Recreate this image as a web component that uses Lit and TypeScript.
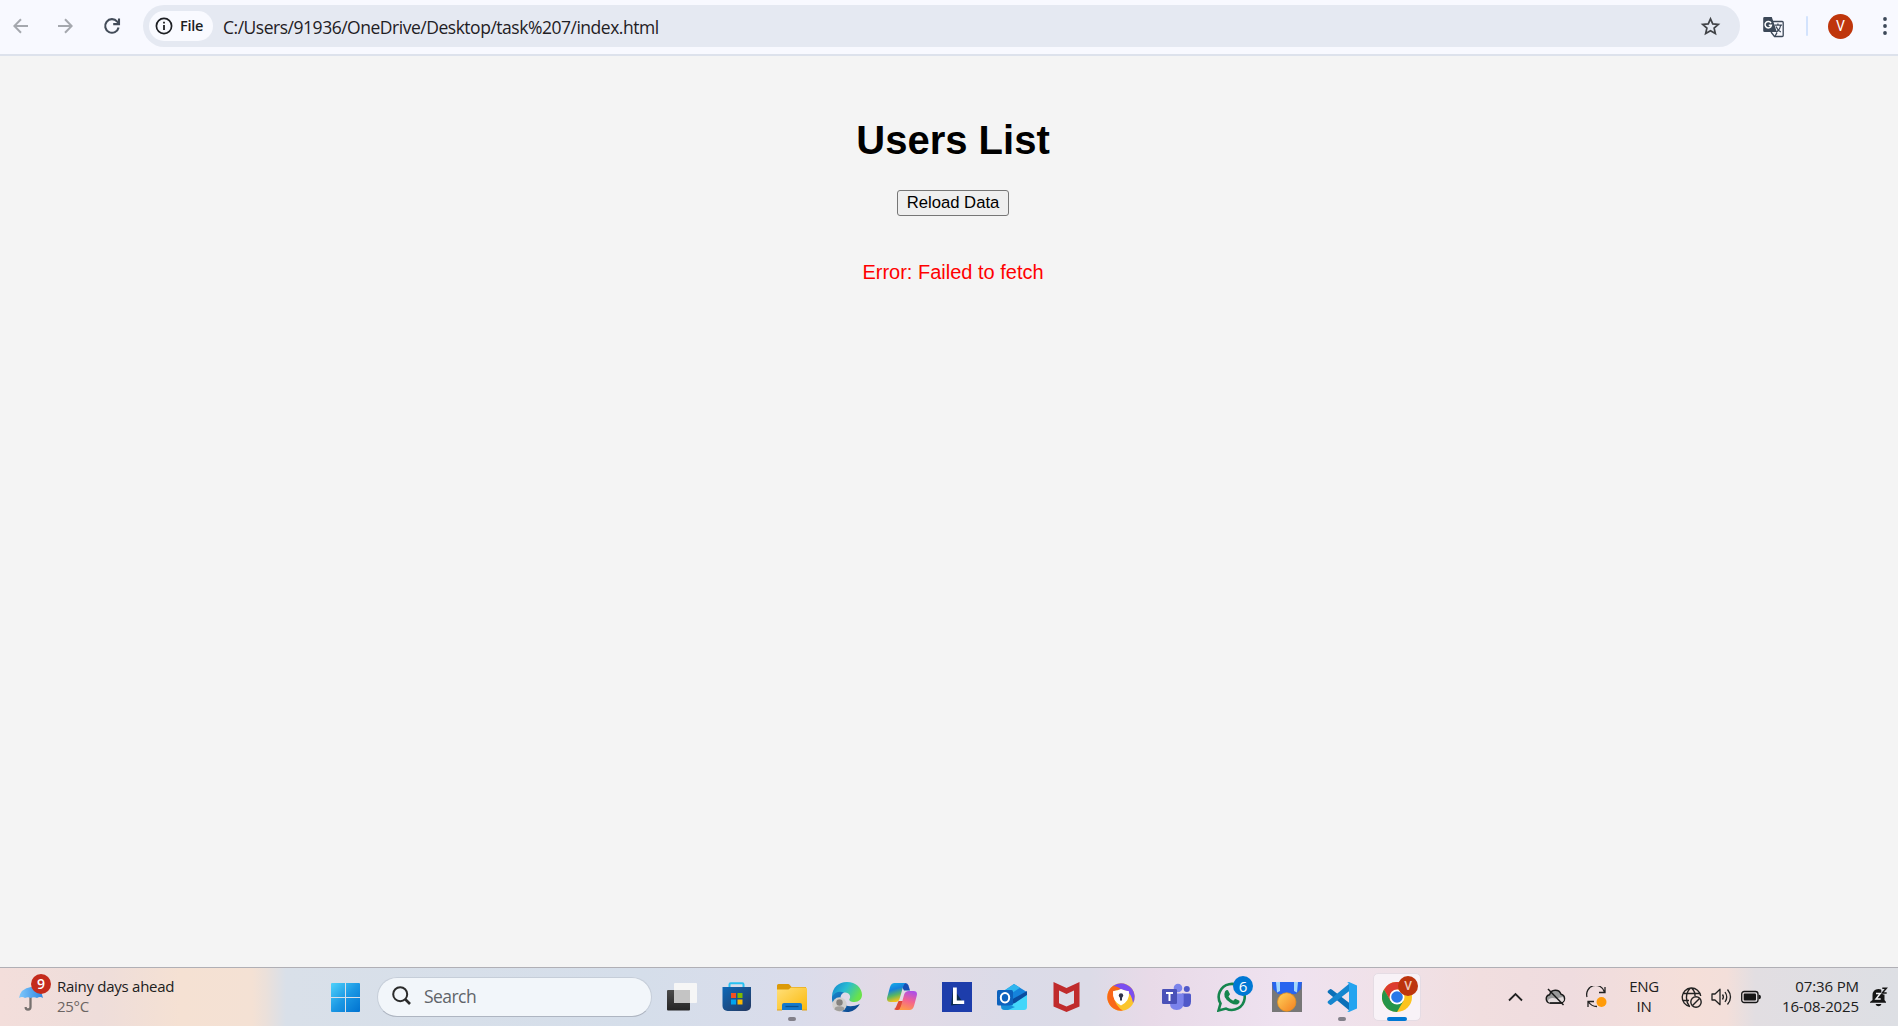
import { LitElement, html, svg, css, TemplateResult } from "lit";
import { customElement } from "lit/decorators.js";

const ui = css`"Segoe UI", "Open Sans", "Noto Sans", sans-serif`;

@customElement("browser-toolbar")
class BrowserToolbar extends LitElement {
  static styles = css`
    :host { display: flex; align-items: center; box-sizing: border-box; height: 56px; padding: 0 4px 2px 13px; background: #f8f9ff; border-bottom: 2px solid #dde2ec; font-family: ${ui}; }
    svg { display: block; flex: none; }
    .nav { display: flex; align-items: center; gap: 30px; width: 130px; }
    .address { display: flex; align-items: center; flex: none; box-sizing: border-box; width: 1597px; height: 42px; border-radius: 21px; background: #e5e9f2; padding: 0 19px 0 6px; }
    .chip { display: flex; align-items: center; box-sizing: border-box; width: 64px; height: 30px; border-radius: 15px; background: #f9faff; padding-left: 6px; gap: 7px; font-size: 14.5px; font-weight: 600; letter-spacing: -0.3px; color: #1d1f23; line-height: 30px; }
    .chip span { margin-top: -1px; }
    .url { flex: 1; margin-left: 10px; font-size: 17.5px; letter-spacing: -0.48px; color: #1f2024; line-height: 28px; padding-top: 1px; }
    .translate { margin: 2px 0 0 23px; }
    .divider { width: 2px; height: 20px; margin: 0 20px 0 22px; background: #d3e3fd; border-radius: 1px; }
    .avatar { display: grid; place-items: center; width: 25px; height: 25px; border-radius: 50%; background: #bf360c; color: #fff; font: 14px/25px Roboto, sans-serif; }
    .menu { margin-left: 29px; }
  `;
  render() {
    return html`
      <div class="nav">
        <svg width="15" height="16" viewBox="0 0 15 16" fill="none" stroke="#a5a8ae" stroke-width="2"><path d="M15 8H1.6M8 1.2 1.3 8 8 14.8"/></svg>
        <svg width="15" height="16" viewBox="0 0 15 16" fill="none" stroke="#a5a8ae" stroke-width="2"><path d="M0 8h13.4M7 1.2 13.7 8 7 14.8"/></svg>
        <svg width="18" height="18" viewBox="0 0 18 18" fill="none" stroke="#434c59" stroke-width="2.1"><path d="M15.6 10.5A6.8 6.8 0 1 1 14.2 4.6L15.5 6"/><path d="M16 1.5v5.6h-5.8"/></svg>
      </div>
      <div class="address">
        <div class="chip">
          <svg width="18" height="18" viewBox="0 0 18 18"><circle cx="9" cy="9" r="7.6" fill="none" stroke="#1d1f23" stroke-width="1.7"/><path d="M9 8v5M9 4.7v1.9" stroke="#1d1f23" stroke-width="1.8"/></svg>
          <span>File</span>
        </div>
        <div class="url">C:/Users/91936/OneDrive/Desktop/task%207/index.html</div>
        <svg width="21" height="20" viewBox="0 0 21 20" fill="none" stroke="#414347" stroke-width="1.7" stroke-linejoin="miter"><path d="m10.5 2.8 2.25 5.1 5.55.5-4.2 3.7 1.25 5.45-4.85-2.9-4.85 2.9 1.25-5.45-4.2-3.7 5.55-.5z"/></svg>
      </div>
      <svg class="translate" width="21" height="22" viewBox="0 0 21 22">
        <path d="M9 5.5h10.2a1 1 0 0 1 1 1v13a1 1 0 0 1-1 1h-7.700L8 16" fill="#f8f9ff" stroke="#3c4858" stroke-width="1.300"/>
        <path d="M1.500 1h7.300l5 15H1.500A1.300 1.300 0 0 1 .2 14.700V2.300A1.300 1.300 0 0 1 1.500 1z" fill="#3c4858"/>
        <path d="M8 7A3.200 3.200 0 1 0 8.400 9.300H5.700" fill="none" stroke="#fff" stroke-width="1.500"/>
        <path d="M11.500 9.200h7.500M14.900 7.500v1.700M17.600 9.500c-.5 3-2.400 5.400-4.300 6.500M13 10.500c1 2.200 2.600 4.200 4.800 5.500M12 20.300l2-3.700" fill="none" stroke="#3c4858" stroke-width="1.300"/>
      </svg>
      <div class="divider"></div>
      <div class="avatar">V</div>
      <svg class="menu" width="6" height="20" viewBox="0 0 6 20" fill="#3c4858"><circle cx="3" cy="3" r="1.900"/><circle cx="3" cy="10" r="1.900"/><circle cx="3" cy="17" r="1.900"/></svg>
    `;
  }
}

@customElement("users-page")
class UsersPage extends LitElement {
  static styles = css`
    :host { display: flex; flex-direction: column; align-items: center; box-sizing: border-box; padding: 61px 0 0 8px; background: #f4f4f4; font-family: Arial, "Liberation Sans", sans-serif; }
    h1 { margin: 0; font-size: 40px; line-height: 46px; }
    button { box-sizing: border-box; width: 112px; height: 26px; margin: 27px 0 0; padding: 0 0 1px; border: 1px solid #767676; border-radius: 3px; background: #efefef; color: #000; font: 16.667px/22px Arial, "Liberation Sans", sans-serif; white-space: nowrap; }
    p { margin: 45px 0 0; color: #f00; font-size: 20px; line-height: 23px; }
  `;
  render() {
    return html`<h1>Users List</h1><button>Reload Data</button><p>Error: Failed to fetch</p>`;
  }
}

const icon = (body: TemplateResult) => html`<svg width="30" height="30" viewBox="0 0 30 30">${body}</svg>`;

const taskView = svg`
  <defs><linearGradient id="tv" x2="0" y2="1"><stop stop-color="#4b4b4b"/><stop offset="1" stop-color="#252525"/></linearGradient></defs>
  <rect y="8" width="23" height="20.500" rx="1" fill="url(#tv)"/>
  <rect x="7" y="1" width="23" height="20" rx="1" fill="#f6f6f6"/><rect x="7" y="8" width="16" height="13" fill="#c4c4c4"/>`;

const store = svg`
  <defs><linearGradient id="st" x2="1" y2="1"><stop stop-color="#0d68b8"/><stop offset="1" stop-color="#25375f"/></linearGradient></defs>
  <path d="M8 6V2.200Q8 1 9.200 1h11.600Q22 1 22 2.200V6" transform="translate(-.5 .3)" fill="none" stroke="#27c1f2" stroke-width="2"/>
  <path d="M.5 5h28.500v19a5 5 0 0 1-5 5h-18.500a5 5 0 0 1-5-5z" fill="url(#st)"/>
  <path d="M9 11h5v5H9z" fill="#f25022"/><path d="M15.500 11h5v5h-5z" fill="#7fba00"/><path d="M9 17.500h5v5H9z" fill="#00a4ef"/><path d="M15.500 17.500h5v5h-5z" fill="#ffb900"/>`;

const explorer = svg`
  <defs><linearGradient id="fo" x2="1" y2="1"><stop stop-color="#ffe07a"/><stop offset="1" stop-color="#fbb90c"/></linearGradient></defs>
  <path d="M0 3.500Q0 2 1.500 2h9.500q1.200 0 2 1.200L14.500 5H29v4H0z" fill="#dc9a08"/>
  <path d="M0 7.500h11.500L14 5.500h14.500q1.500 0 1.500 1.500v21H0z" fill="url(#fo)"/>
  <path d="M5 28v-5q0-2 2-2h16q2 0 2 2v5z" fill="#1479cb"/><path d="M8.500 24.500h13" stroke="#0b4f8c" stroke-width="1.300"/><path d="M0 28h5M25 28h5" stroke="#e0a21a"/>`;

const edge = svg`
  <defs>
    <linearGradient id="ea" x2="1" y2=".45"><stop stop-color="#1182cf"/><stop offset=".5" stop-color="#28bcd2"/><stop offset="1" stop-color="#69e24b"/></linearGradient>
    <linearGradient id="eb" x2="1" y2="1"><stop stop-color="#1684cc"/><stop offset="1" stop-color="#0b3e86"/></linearGradient>
  </defs>
  <path d="M0 14C.5 5.500 6.500 0 15 0c8.800 0 15 6 15 12.800 0 4.500-3.200 7.200-7.500 7.200-4 0-6-1.500-5-3 1.600-2.300.3-6.500-4.500-6.500C7 10.500 2 14 0 20z" fill="url(#ea)"/>
  <path d="M0 15C2.500 10 7.500 8.500 12 10.500c-4 2-4.500 6.500-2 10 3 4.200 10 5 17.800 1.500C24.500 27.500 20 30 15 30 6 30-.5 23 0 15z" fill="url(#eb)"/>
  <circle cx="7.500" cy="22.500" r="7.200" fill="#d2d0ce"/><circle cx="7.500" cy="20.500" r="3.200" fill="#85827f"/><path d="M2.500 27.500q0-3.200 5-3.200t5 3.200q-5 3.500-10 0z" fill="#a09e9b"/>`;

const copilot = svg`
  <defs>
    <linearGradient id="ca" x2=".3" y2="1"><stop stop-color="#16b4ea"/><stop offset=".4" stop-color="#1681dc"/><stop offset=".7" stop-color="#59b663"/><stop offset="1" stop-color="#f2c21b"/></linearGradient>
    <linearGradient id="cb" x1=".6" x2=".3" y2="1"><stop stop-color="#ae50e6"/><stop offset=".5" stop-color="#f4648e"/><stop offset="1" stop-color="#ff9c48"/></linearGradient>
  </defs>
  <path d="M13 1h5.500q2.200 0 3 2.500L23 8.500h-6z" fill="#174db3"/>
  <path d="M7 27q1 0 2-2l2.500-6h5L13 28H9.500Q8 28 7 27z" fill="#df4a36"/>
  <path d="M7.500 1H19q-2 .5-3 4l-3 10.500Q12 20 8.500 20H3.500Q-1 20 .3 15L3 5Q4.300 1 7.500 1z" fill="url(#ca)"/>
  <path d="M22.500 28H11q2-.5 3-4l3-11q1-4 5-4h4.500q4.500 0 3.200 5L27 24q-1.200 4-4.500 4z" fill="url(#cb)"/>`;

const lApp = svg`<path d="M0 0h30v30H0z" fill="#1d3dab"/><path d="m11 6-2 17.500 13-1.500z" fill="#0b2c4e"/><path d="M11 5.500h3.800v13h7.400V22H11z" fill="#fff"/>`;

const outlook = svg`
  <path d="M4 11 17 2l12 7.500v5L14 23H4z" fill="#1583dc"/><path d="m8 8 9-6 6 3.700L9 15z" fill="#2fb5ee"/>
  <path d="m14 18 16-9v6L15 25z" fill="#0a4c9f"/><path d="M30 13v12q0 3-3 3H8q-3 0-4-2l14-5z" fill="#43d6fa"/><path d="m4 20 14 5-7 3H8q-4 0-4-4z" fill="#168fd8"/>
  <rect y="8" width="16" height="15.500" rx="1.500" fill="#0d62bd"/><ellipse cx="8" cy="15.700" rx="4.200" ry="4.700" fill="none" stroke="#fff" stroke-width="2"/>`;

const mcafee = svg`<path fill="#c02b2c" fill-rule="evenodd" d="m1.500 0 13 6 13-6v24.500l-13 5.500-13-5.500zm5.500 8.500v12.700l7.500 3.300 7.500-3.300V8.500L14.500 12z"/>`;

const secureBrowser = svg`
  <circle cx="14" cy="15" r="13.700" fill="#fbc52d"/>
  <path d="M6 4A13.700 13.700 0 0 1 27.700 14q0 4-1.700 7-1-8-6-11.500T6 9z" fill="#7b4ff0"/>
  <path d="M8.500 2.500A13.700 13.700 0 0 0 16 28.600q-3-1-6-5.500T6 9q3-1.500 8-1.500-3-3.500-8-3.500z" fill="#f96719"/>
  <path d="M14 7q4 1.800 8 2.300 1 10-8 14.200Q5 19.300 6 9.300 10 8.800 14 7z" fill="#fff"/>
  <circle cx="14" cy="13.500" r="2.200" fill="#303448"/><path d="M13 14h2v4.500h-2z" fill="#303448"/>`;

const teams = svg`
  <circle cx="16" cy="6" r="4.300" fill="#7b83eb"/><circle cx="24.800" cy="7" r="3" fill="#5059c9"/>
  <path d="M20 11.500h7.500q1.500 0 1.500 1.500v6.500q0 5.500-5 5.500-4 0-4-4z" fill="#5059c9"/>
  <path d="M9 11.500h11.500q1.200 0 1.200 1.200V20q0 8-7 8T8 21z" fill="#7b83eb"/>
  <rect y="7" width="15" height="15" rx="1.300" fill="#4a51b8"/><path d="M4 11h7M7.500 11v8" stroke="#fff" stroke-width="2"/>`;

const whatsapp = svg`
  <path d="M1.500 28.500 3.500 21.500A13 13 0 1 1 9 26.600z" fill="none" stroke="#15854d" stroke-width="2.600"/>
  <path d="M8 9.500q1.500-2 3-1.300l2 4-1.500 2.200q1.700 3 4.700 4.300l2-2 4.300 2q.6 2-1.800 3.500-2.500 1.200-7-1.200-4.500-2.500-6-6Q6.800 12 8 9.500z" fill="#15854d"/>`;

const medal = svg`
  <defs><linearGradient id="md" x2="1" y2="1"><stop stop-color="#ffd25a"/><stop offset="1" stop-color="#f47f20"/></linearGradient></defs>
  <path d="M0 0h30v30H0z" fill="#777"/><path d="M0 0h30l-1 7-5 5H6L1 7z" fill="#2864ef"/><path d="M4 0h4v9L5 10.500zM22 0h4l-1 10.500L22 9z" fill="#a5d8fb"/>
  <circle cx="14.700" cy="20" r="9.200" fill="url(#md)" stroke="#e8931c" stroke-width=".8"/>`;

const vscode = svg`
  <path d="M1 8.800 3 7.200q.8-.5 1.800.3L23 21.500V29L.9 10.700Q.2 9.700 1 8.800z" fill="#0b70b8"/>
  <path d="M1 21.200 3 22.800q.8.500 1.800-.3L23 8.500V1L.9 19.300q-.7 1 .1 1.900z" fill="#1686cf"/>
  <path d="M22 0 30 3.500v23L22 30q-1 0-1.800-1 1.800.5 1.800-1.500v-25Q22 .5 20.200 1 21 0 22 0z" fill="#24a4f0"/>`;

const chrome = svg`
  <circle cx="15" cy="15" r="15" fill="#fcc31e"/>
  <path d="M2 7.500A15 15 0 0 1 28 7.500H15L8.500 19z" fill="#dc3b30"/>
  <path d="M2 7.500 8.500 18.800Q12 23 21.500 18.800L15 30A15 15 0 0 1 2 7.500z" fill="#24954a"/>
  <circle cx="15" cy="15" r="7.500" fill="#fff"/><circle cx="15" cy="15" r="5.800" fill="#2a78e8"/>`;

@customElement("task-bar")
class TaskBar extends LitElement {
  static styles = css`
    :host { display: flex; align-items: center; box-sizing: border-box; height: 59px; padding: 0 10px 0 17px; border-top: 1px solid #b0afb5; font: 15px/20px ${ui}; color: #202020;
      background: linear-gradient(90deg, #f3dedb 0, #eeddda 100px, #f5e1d3 180px, #f4e1d4 252px, #ebe0da 266px, #d9e0e9 286px, #d5deea 640px, #dadceb 800px, #e3dae6 890px, #dbdbe8 1010px, #dcdbe7 1090px, #e8dae8 1150px, #efe2f0 1290px, #f0e1e7 1400px, #f1dedf 1480px, #efdcdf 1570px, #f5dfd9 1690px, #f3dfda 1727px, #e2dee2 1755px, #dddfe4 1898px); }
    svg { display: block; flex: none; }
    .weather { display: flex; width: 314px; align-items: center; }
    .umbrella { position: relative; width: 40px; height: 44px; padding-top: 10px; box-sizing: border-box; }
    .badge { position: absolute; display: grid; place-items: center; width: 20px; height: 20px; border-radius: 50%; color: #fff; font-size: 14px; line-height: 20px; }
    .red { left: 14px; top: -1px; background: #c42b1c; font-weight: 600; }
    .blue { left: 16px; top: -6px; background: #0078d4; font-size: 15px; }
    .profile { left: 16px; top: -6px; background: #bd340d; color: #efc8b8; font: 500 12px/20px Roboto, sans-serif; }
    .forecast { letter-spacing: -0.27px; margin-top: -3px; }
    .temp { color: #6b6462; }
    .search { display: flex; align-items: center; box-sizing: border-box; width: 275px; height: 40px; margin: 0 5px 0 17px; padding: 0 0 2px 14px; gap: 13px; border: 1px solid #c6ced9; border-bottom-color: #aeb5c1; border-radius: 20px; background: #f2f6fa; color: #606469; font-size: 17.5px; letter-spacing: -0.55px; }
    .apps { display: flex; gap: 5px; }
    .app { position: relative; display: grid; place-items: center; box-sizing: border-box; width: 50px; height: 50px; }
    .glyph { position: relative; width: 30px; height: 30px; }
    .active::before { content: ""; position: absolute; inset: 1px; border: 1px solid #e5dce4; border-radius: 5px; background: #f8f2f7; }
    .running::after { content: ""; position: absolute; left: 21px; bottom: 1px; width: 8px; height: 4px; border-radius: 2px; background: #82808a; }
    .active::after { left: 15px; width: 20px; background: #0078d4; }
    .tray { display: flex; align-items: center; flex: 1; }
    .chevron { margin-left: 86px; }
    .cloud { margin-left: 22px; }
    .sync { margin-left: 20px; }
    .lang { width: 36px; margin: -2px 19px 0 19px; text-align: center; letter-spacing: -0.3px; }
    .status { display: flex; gap: 9px; align-items: center; }
    .clock { flex: 1; text-align: right; letter-spacing: -0.12px; margin: -3px 11px 0 0; }
  `;
  app(body: TemplateResult, state = "", badge: unknown = "") {
    return html`<div class="app ${state}"><div class="glyph">${icon(body)}${badge}</div></div>`;
  }
  render() {
    return html`
      <div class="weather">
        <div class="umbrella">
          <svg width="28" height="28" viewBox="0 0 28 28">
            <defs><linearGradient id="um" x2="1"><stop stop-color="#7fc8fa"/><stop offset="1" stop-color="#2e86e2"/></linearGradient></defs>
            <path d="M13.500 11v11q0 2.500-2.500 2.500T8.700 22" fill="none" stroke="#77716f" stroke-width="2.300"/>
            <path d="M2 13Q3.500 3.500 14 2q10.500 1.500 12 11-3-2-6 0-3-1.500-6.200 0-3-1.500-5.800 0-3-2-6 0z" fill="url(#um)"/>
          </svg>
          <span class="badge red">9</span>
        </div>
        <div class="forecast">Rainy days ahead<div class="temp">25°C</div></div>
      </div>
      <svg width="29" height="29" viewBox="0 0 29 29">
        <defs><linearGradient id="win" gradientUnits="userSpaceOnUse" x2="29" y2="29"><stop stop-color="#4fd2fb"/><stop offset=".5" stop-color="#1b98e4"/><stop offset="1" stop-color="#0072d0"/></linearGradient></defs>
        <path fill="url(#win)" d="M1 0h13v14H0V1q0-1 1-1zM15 0h13q1 0 1 1v13H15zM0 15h14v14H1q-1 0-1-1zM15 15h14v13q0 1-1 1H15z"/>
      </svg>
      <div class="search">
        <svg width="19" height="20" viewBox="0 0 19 20" fill="none" stroke="#2b2b2b"><circle cx="8.200" cy="8.200" r="7" stroke-width="2"/><path d="m13 13 5 5" stroke-width="2.600"/></svg>
        <span>Search</span>
      </div>
      <div class="apps">
        ${this.app(taskView)}${this.app(store)}${this.app(explorer, "running")}${this.app(edge)}${this.app(copilot)}${this.app(lApp)}
        ${this.app(outlook)}${this.app(mcafee)}${this.app(secureBrowser)}${this.app(teams)}
        ${this.app(whatsapp, "", html`<span class="badge blue">6</span>`)}
        ${this.app(medal)}${this.app(vscode, "running")}
        ${this.app(chrome, "running active", html`<span class="badge profile">V</span>`)}
      </div>
      <div class="tray">
        <svg class="chevron" width="15" height="10" viewBox="0 0 15 10" fill="none" stroke="#222" stroke-width="1.800"><path d="m1 8.500 6.500-6.500L14 8.500"/></svg>
        <svg class="cloud" width="21" height="18" viewBox="0 0 21 18" stroke="#181818" stroke-width="1.400">
          <path d="M5 15a4.200 4.200 0 0 1-.4-8.300A6 6 0 0 1 16 6.200 4.500 4.500 0 0 1 16 15z" fill="#999"/>
          <path d="M4 14.500q-2-1.500 0-3.500 3-1.500 6.500-.5L18 9l1 3q-1 2.300-3 2.300z" fill="#e4dcdd" stroke="none"/>
          <path d="M5 15h11" fill="none"/><path d="m3 1 15.500 16" stroke-width="1.500"/>
        </svg>
        <svg class="sync" width="21" height="22" viewBox="0 0 21 22" fill="none" stroke="#222" stroke-width="1.300">
          <path d="M1 11A9 9 0 0 1 18.500 6M19 1v5.500h-6M8 15.500H2V21M2.500 16q3 4.500 8.500 4.500"/><circle cx="15.500" cy="16" r="5" fill="#ff9b0a" stroke="none"/>
        </svg>
        <div class="lang">ENG<br>IN</div>
        <div class="status">
          <svg width="21" height="21" viewBox="0 0 21 21" fill="none" stroke="#222" stroke-width="1.400">
            <path d="M19.700 9A9.300 9.300 0 1 0 9 19.500M1.500 6.500h17.500M1.500 13.500H8M9.500 1C3.500 7 5 15 8.500 19.500M10.500 1Q14.300 4.500 14 9"/>
            <circle cx="15" cy="15" r="5.200"/><path d="m11.500 18.500 7-7"/>
          </svg>
          <svg width="21" height="20" viewBox="0 0 21 20" fill="none" stroke="#222" stroke-width="1.300">
            <path d="M1 7h3l5-4.700v15.400L4 13H1z" stroke-linejoin="round"/><path d="M11.500 7.500q1.800 2.500 0 5"/><path d="M14 5q3.500 5 0 10"/><path d="M16.500 2.500q6 7.500 0 15"/>
          </svg>
          <svg width="20" height="14" viewBox="0 0 20 14"><rect x=".7" y="1.500" width="16.300" height="11" rx="2.500" fill="none" stroke="#161616" stroke-width="1.300"/><rect x="2.700" y="3.500" width="12.300" height="7" rx="1" fill="#161616"/><path d="M17.500 4.500q2.500.3 2.500 2.500t-2.500 2.500z" fill="#161616"/></svg>
        </div>
        <div class="clock">07:36 PM<br>16-08-2025</div>
        <svg width="18" height="20" viewBox="0 0 18 20">
          <path d="M2.500 13V8.500Q2.500 2 8.500 2t6 6.500V13l1.500 2v.8H0V15zM5.500 17h6q-.8 2.300-3 2.300t-3-2.300z" fill="#161616"/>
          <path d="M11.300 0H18v7.500h-4.500l-2.200-1z" fill="#dedfe4"/>
          <path d="M12.300 1.300h4l-4 4.700h4.400" fill="none" stroke="#161616" stroke-width="1.500"/>
          <path d="M6 6.500h4.300L6 12h4.700" fill="none" stroke="#f4f4f6" stroke-width="1.500"/>
        </svg>
      </div>
    `;
  }
}

@customElement("app-root")
class AppRoot extends LitElement {
  static styles = css`
    :host { display: flex; flex-direction: column; width: 100%; height: 100vh; overflow: hidden; }
    users-page { flex: 1; }
  `;
  render() {
    return html`<browser-toolbar></browser-toolbar><users-page></users-page><task-bar></task-bar>`;
  }
}
